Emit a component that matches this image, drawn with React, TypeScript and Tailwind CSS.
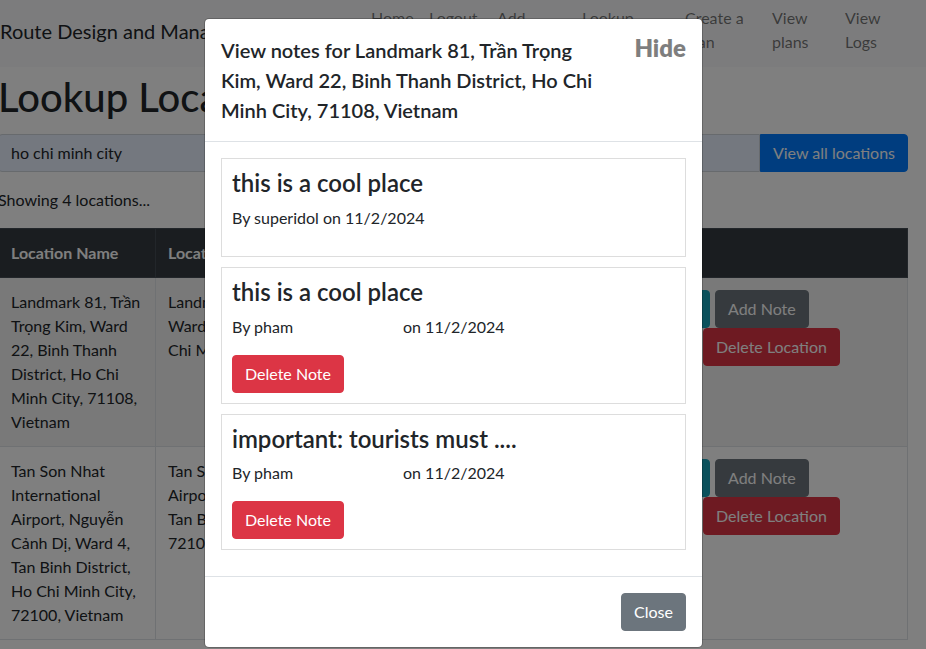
import React from 'react';

const navLinks = [
  { w: 'w-[58px]', lines: ['Home'] },
  { w: 'w-[68px]', lines: ['Logout'] },
  { w: 'w-[85px]', lines: ['Add', 'Location'] },
  { w: 'w-[103px]', lines: ['Lookup', 'Locations'] },
  { w: 'w-[87px]', lines: ['Create a', 'plan'] },
  { w: 'w-[73px]', lines: ['View', 'plans'] },
  { w: 'w-[70px]', lines: ['View', 'Logs'] },
];

const locations = [
  {
    name: ['Landmark 81, Trần', 'Trọng Kim, Ward', '22, Binh Thanh', 'District, Ho Chi', 'Minh City, 71108,', 'Vietnam'],
    address: ['Landmark 81, Trần Trọng Kim,', 'Ward 22, Binh Thanh District, Ho', 'Chi Minh City, 71108, Vietnam'],
  },
  {
    name: ['Tan Son Nhat', 'International', 'Airport, Nguyễn', 'Cảnh Dị, Ward 4,', 'Tan Binh District,', 'Ho Chi Minh City,', '72100, Vietnam'],
    address: ['Tan Son Nhat International', 'Airport, Nguyễn Cảnh Dị, Ward 4,', 'Tan Binh District, Ho Chi Minh City,', '72100, Vietnam'],
  },
];

const notes = [
  { title: 'this is a cool place', author: 'superidol', date: '11/2/2024', canDelete: false },
  { title: 'this is a cool place', author: 'pham', date: '11/2/2024', canDelete: true },
  { title: 'important: tourists must ....', author: 'pham', date: '11/2/2024', canDelete: true },
];

const btn = 'inline-block rounded-[4px] border px-3 py-1.5 text-[16px] leading-6 whitespace-nowrap';

export default function App() {
  return (
    <div className="relative h-[649px] w-[926px] overflow-hidden bg-white font-['Lato','Noto_Sans',sans-serif] text-[16px] leading-6 text-[#212529]">
      {/* navbar */}
      <nav className="flex h-[67px] items-start bg-[#f8f9fa]">
        <div className="mt-[16px] w-[363px] whitespace-nowrap text-[20px] leading-[30px]">
          Route Design and Management
        </div>
        <div className="flex">
          {navLinks.map((l, i) => (
            <div key={i} className={`${l.w} px-2 pt-[6px] leading-6 text-black/55`}>
              {l.lines.map((t) => (
                <div key={t} className="whitespace-nowrap">{t}</div>
              ))}
            </div>
          ))}
        </div>
      </nav>

      {/* page */}
      <main className="ml-[-2px] w-[910px]">
        <h1 className="mt-[6px] whitespace-nowrap text-[40px] font-medium leading-[48px]">Lookup Locations</h1>

        <div className="mt-[13px] flex h-[38px]">
          <input
            defaultValue="ho chi minh city"
            className="min-w-0 flex-1 rounded-l-[4px] border border-[#ced4da] bg-[#e8f0fe] px-3 text-[16px] text-[#212529] outline-none"
          />
          <button className="w-[148px] rounded-r-[4px] border border-[#007bff] bg-[#007bff] text-white">
            View all locations
          </button>
        </div>

        <p className="my-4">Showing 4 locations...</p>

        <table className="w-full border-collapse text-left">
          <thead>
            <tr className="bg-[#343a40] text-white">
              <th className="w-[157px] border border-[#454d55] px-3 py-3 font-bold">Location Name</th>
              <th className="w-[443px] border border-[#454d55] px-3 py-3 font-bold">Location Address</th>
              <th className="border border-[#454d55] px-3 py-3 font-bold">Actions</th>
            </tr>
          </thead>
          <tbody>
            {locations.map((loc, i) => (
              <tr key={i} className={i % 2 === 0 ? 'bg-black/5' : ''}>
                <td className="border border-[#dee2e6] px-3 py-3 align-top">
                  {loc.name.map((t) => (
                    <div key={t} className="whitespace-nowrap">{t}</div>
                  ))}
                </td>
                <td className="border border-[#dee2e6] px-3 py-3 align-top">
                  {loc.address.map((t) => (
                    <div key={t} className="whitespace-nowrap">{t}</div>
                  ))}
                </td>
                <td className="border border-[#dee2e6] px-3 py-3 align-top">
                  <div className="flex">
                    <button className={`${btn} w-[99px] border-[#17a2b8] bg-[#17a2b8] text-left text-white`}>Notes</button>
                    <button className={`${btn} ml-[5px] border-[#6c757d] bg-[#6c757d] text-white`}>Add Note</button>
                  </div>
                  <button className={`${btn} ml-[92px] border-[#dc3545] bg-[#dc3545] text-white`}>Delete Location</button>
                </td>
              </tr>
            ))}
          </tbody>
        </table>
      </main>

      {/* backdrop */}
      <div className="absolute inset-0 bg-black/50" />

      {/* modal */}
      <div className="absolute left-[204px] top-[18px] w-[499px] rounded-[5px] border border-black/20 bg-white bg-clip-padding">
        <div className="flex items-start border-b border-[#dee2e6] p-4">
          <h5 className="text-[20px] font-semibold leading-[30px]">
            View notes for Landmark 81, Trần Trọng
            <br />
            Kim, Ward 22, Binh Thanh District, Ho Chi
            <br />
            Minh City, 71108, Vietnam
          </h5>
          <button className="-m-4 ml-auto p-4 pt-[17px] text-[24px] font-extrabold leading-none text-black opacity-50">Hide</button>
        </div>

        <div className="p-4">
          {notes.map((n, i) => (
            <div key={i} className="mb-[10px] border border-[#dddddd] p-[10px]">
              <h4 className="mb-2 text-[24px] font-semibold leading-[1.2]">{n.title}</h4>
              {n.canDelete ? (
                <p className="mb-4 flex">
                  <span className="w-[171px]">By {n.author}</span>
                  <span>on {n.date}</span>
                </p>
              ) : (
                <p className="mb-4">
                  By {n.author} on {n.date}
                </p>
              )}
              {n.canDelete && (
                <button className={`${btn} border-[#dc3545] bg-[#dc3545] text-white`}>Delete Note</button>
              )}
            </div>
          ))}
        </div>

        <div className="flex justify-end border-t border-[#dee2e6] p-3">
          <button className={`${btn} m-1 border-[#6c757d] bg-[#6c757d] text-white`}>Close</button>
        </div>
      </div>
    </div>
  );
}
